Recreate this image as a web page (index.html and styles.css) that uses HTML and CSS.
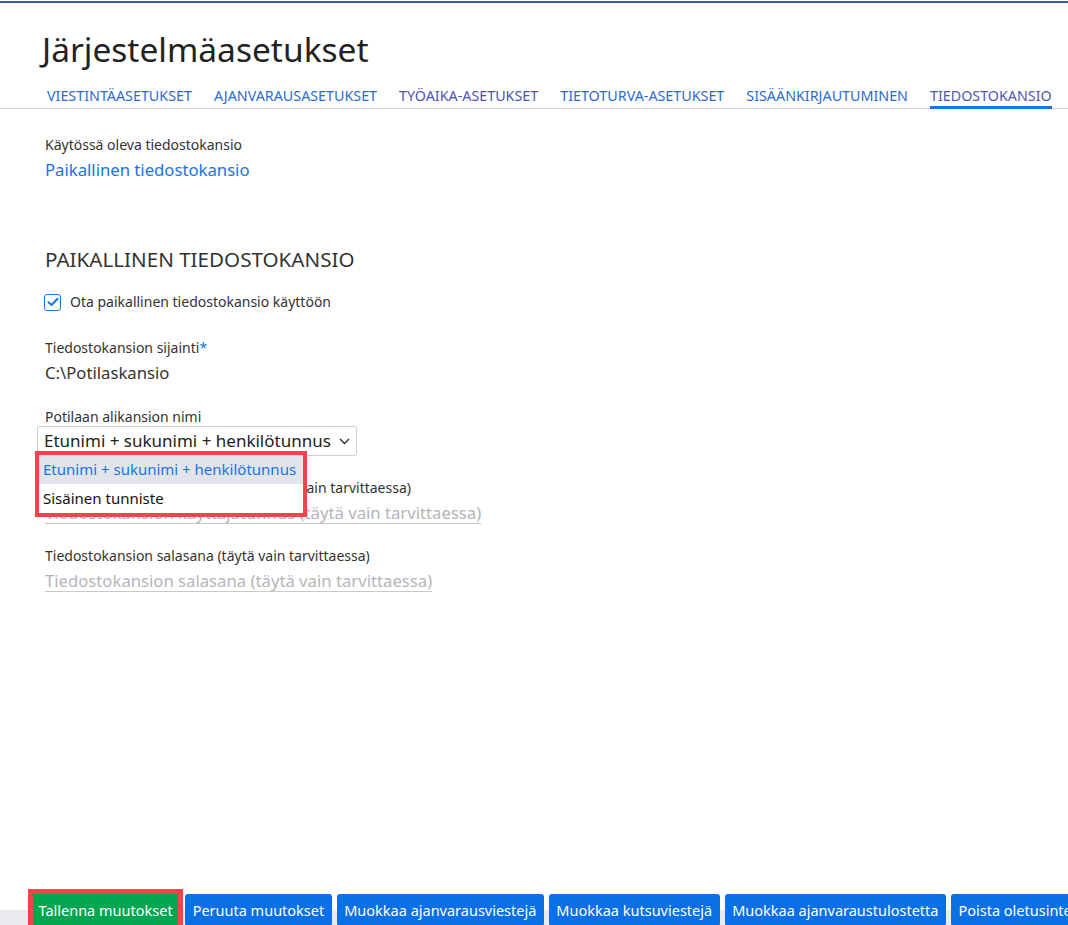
FILE: index.html
```html
<!DOCTYPE html>
<html lang="fi">
  <head>
    <meta charset="UTF-8" />
    <meta name="viewport" content="width=device-width, initial-scale=1.0" />
    <title>Järjestelmäasetukset</title>
    <link rel="stylesheet" href="styles.css">
  </head>
  <body>
    <div class="topline"></div>
    <h1 class="page-title">Järjestelmäasetukset</h1>
    <nav class="tabs">
      <a href="#" class="tab">VIESTINTÄASETUKSET</a>
      <a href="#" class="tab">AJANVARAUSASETUKSET</a>
      <a href="#" class="tab visited">TYÖAIKA-ASETUKSET</a>
      <a href="#" class="tab">TIETOTURVA-ASETUKSET</a>
      <a href="#" class="tab">SISÄÄNKIRJAUTUMINEN</a>
      <a href="#" class="tab active">TIEDOSTOKANSIO</a>
    </nav>

    <main class="content">
      <div class="field-label first">Käytössä oleva tiedostokansio</div>
      <div class="value link">Paikallinen tiedostokansio</div>

      <h2 class="section-title">PAIKALLINEN TIEDOSTOKANSIO</h2>

      <label class="check-row">
        <span class="checkbox">
          <svg width="12" height="10" viewBox="0 0 12 10"><path d="M1.5 5.2 L4.5 8 L10.5 1.8" fill="none" stroke="#1a73e8" stroke-width="2" stroke-linecap="round" stroke-linejoin="round"/></svg>
        </span>
        Ota paikallinen tiedostokansio käyttöön
      </label>

      <div class="field-label spaced">Tiedostokansion sijainti<span class="req">*</span></div>
      <div class="value">C:\Potilaskansio</div>

      <div class="field-label tight">Potilaan alikansion nimi</div>
      <div class="select-wrap">
        <div class="select">
          Etunimi + sukunimi + henkilötunnus
          <svg class="chevron" width="11" height="7" viewBox="0 0 11 7"><path d="M1 1 L5.5 5.5 L10 1" fill="none" stroke="#333" stroke-width="1.4"/></svg>
        </div>
        <ul class="options">
          <li class="option selected">Etunimi + sukunimi + henkilötunnus</li>
          <li class="option">Sisäinen tunniste</li>
        </ul>
      </div>

      <div class="field-label">Tiedostokansion käyttäjätunnus (täytä vain tarvittaessa)</div>
      <span class="input">Tiedostokansion käyttäjätunnus (täytä vain tarvittaessa)</span>

      <div class="field-label">Tiedostokansion salasana (täytä vain tarvittaessa)</div>
      <span class="input">Tiedostokansion salasana (täytä vain tarvittaessa)</span>
    </main>

    <footer class="toolbar">
      <button class="btn btn-save">Tallenna muutokset</button>
      <button class="btn">Peruuta muutokset</button>
      <button class="btn">Muokkaa ajanvarausviestejä</button>
      <button class="btn">Muokkaa kutsuviestejä</button>
      <button class="btn">Muokkaa ajanvaraustulostetta</button>
      <button class="btn">Poista oletusinternetajanvaraus</button>
    </footer>
  </body>
</html>
```
FILE: styles.css
```css
html,
body {
  height: 100%;
}
body {
  margin: 0;
  font-family: "Noto Sans", sans-serif;
  color: #333;
  background: #fff;
  display: flex;
  flex-direction: column;
  overflow: hidden;
}
.topline {
  height: 2px;
  margin-top: 1px;
  background: #3a5aa6;
}
.page-title {
  margin: 26px 0 0 42px;
  font-size: 33.5px;
  line-height: 40px;
  font-weight: 400;
  color: #222;
}
.tabs {
  display: flex;
  gap: 22px;
  padding-left: 47px;
  margin-top: 18px;
  border-bottom: 1px solid #d6d6d6;
}
.tab {
  font-size: 14.3px;
  line-height: 18px;
  padding-bottom: 1px;
  border-bottom: 3px solid transparent;
  margin-bottom: -1px;
  color: #2a6bd2;
  text-decoration: none;
  white-space: nowrap;
}
.tab.visited {
  color: #4d53ae;
}
.tab.active {
  color: #4f56b0;
  border-bottom-color: #1a73e8;
}
.content {
  flex: 1;
  padding-left: 45px;
}
.field-label {
  font-size: 14px;
  line-height: 20px;
  margin-top: 22px;
  color: #333;
}
.field-label.first {
  margin-top: 26px;
}
.field-label.spaced {
  margin-top: 25px;
}
.field-label.tight {
  line-height: 18px;
  margin-top: 23px;
}
.req {
  color: #1a73e8;
}
.value {
  font-size: 16.7px;
  line-height: 24px;
  margin-top: 3px;
  color: #333;
}
.value.link {
  color: #1a73e8;
}
.section-title {
  margin: 63px 0 0;
  font-size: 20.6px;
  line-height: 28px;
  font-weight: 400;
  color: #333;
}
.check-row {
  display: flex;
  align-items: center;
  gap: 9px;
  margin-top: 18px;
  font-size: 14px;
  line-height: 22px;
  margin-left: -1px;
}
.checkbox {
  width: 15px;
  height: 15px;
  border: 1.5px solid #1a73e8;
  border-radius: 3px;
  display: flex;
  align-items: center;
  justify-content: center;
}
.select-wrap {
  position: relative;
  margin-left: -8px;
  width: 320px;
}
.select {
  height: 28px;
  border: 1px solid #cfcfcf;
  border-radius: 2px;
  padding-left: 6px;
  font-size: 17px;
  line-height: 28px;
  color: #222;
  display: flex;
  align-items: center;
  gap: 8px;
}
.chevron {
  margin-top: 1px;
}
.options {
  position: absolute;
  top: 25px;
  left: -2px;
  width: 264px;
  margin: 0;
  padding: 0;
  list-style: none;
  background: #fff;
  border: 4px solid #f4434b;
  z-index: 2;
}
.option {
  height: 29px;
  line-height: 29px;
  padding-left: 4px;
  font-size: 15px;
  color: #111;
  white-space: nowrap;
}
.option.selected {
  background: #e1e5ea;
  color: #1a73e8;
}
.input {
  display: inline-block;
  margin-top: 5px;
  font-size: 16.7px;
  line-height: 20px;
  color: #b5b5bc;
  border-bottom: 1px solid #c8c8c8;
}
.toolbar {
  display: flex;
  gap: 5px;
  height: 36px;
  padding: 5px 0 0 33px;
  box-sizing: border-box;
  background: linear-gradient(to bottom, #fff 21px, #e8eaed 21px);
  white-space: nowrap;
}
.btn {
  flex: none;
  height: 32px;
  padding: 0 7.5px;
  font-family: "Noto Sans", sans-serif;
  font-size: 14.5px;
  color: #fff;
  background: #0b6fe6;
  border: none;
  border-radius: 3px;
  cursor: pointer;
}
.btn-save {
  padding: 0 5.5px;
  background: #00a650;
  border-radius: 0;
  outline: 5px solid #f4434b;
  margin-right: 2px;
}
```
